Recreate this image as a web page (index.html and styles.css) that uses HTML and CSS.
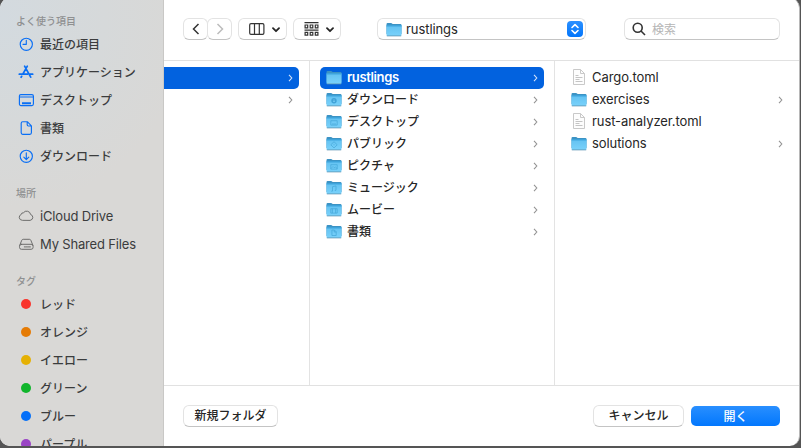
FILE: index.html
```html
<!DOCTYPE html>
<html lang="ja">
<head>
<meta charset="utf-8">
<title>開く</title>
<link rel="stylesheet" href="styles.css">
</head>
<body>
<svg class="defs" aria-hidden="true">
  <defs>
    <linearGradient id="face" x1="0" y1="0" x2="0" y2="1"><stop offset="0" stop-color="#62c1f1"/><stop offset="1" stop-color="#7ad2fb"/></linearGradient>
    <symbol id="folder" viewBox="0 0 16 15">
      <path d="M.5 2.2Q.5 1 1.6 1H5q.7 0 1.1.5l.5.5h7.8q1.1 0 1.1 1.1V12H.5z" fill="#3c93c4"/>
      <path d="M.5 3.4h15v9.5q0 1.1-1.1 1.1H1.6Q.5 14 .5 12.900z" fill="url(#face)"/>
      <path d="M.5 3.9h15" stroke="#339fd9"/>
      <path d="M.8 13.900h14.400" stroke="#5d95b2" stroke-width=".8"/>
    </symbol>
    <symbol id="doc" viewBox="0 0 14 16">
      <path d="M1.500.5h7l4 4v11h-11z" fill="#fdfdfd" stroke="#c9c9c9"/>
      <path d="M8.500.5v4h4" fill="none" stroke="#c9c9c9"/>
      <path d="M3.500 6.500h3M3.500 8.500h7M3.500 10.500h4M3.500 12.500h7" stroke="#bdbdbd" stroke-width=".9"/>
    </symbol>
    <symbol id="chev" viewBox="0 0 5 8"><path d="M1 .8 3.800 4 1 7.200" fill="none" stroke="currentColor" stroke-width="1.100"/></symbol>
    <symbol id="down" viewBox="0 0 8 6"><path d="M1 1.200 4 4.200 7 1.200" fill="none" stroke="currentColor" stroke-width="1.800" stroke-linecap="round" stroke-linejoin="round"/></symbol>
  </defs>
</svg>
<div class="window">
  <nav class="sidebar">
    <h2>よく使う項目</h2>
    <ul>
      <li><svg class="ic" viewBox="0 0 16 16"><circle cx="8.300" cy="8.300" r="6.100"/><path d="M8.300 4.300v4H5"/></svg>最近の項目</li>
      <li><svg class="ic" viewBox="0 0 16 16"><path class="bold" d="M6.600 2.200 12.700 13.200M9.300 2.200 4.900 10M1.300 10.200h8M12 10.200h2.700M3.700 12.300l-.6 1"/></svg>アプリケーション</li>
      <li><svg class="ic" viewBox="0 0 16 16"><rect x="1.400" y="2.600" width="14" height="11" rx="1.500"/><path d="M1.500 5h14"/><path class="dock" d="M4 11.200h9"/></svg>デスクトップ</li>
      <li><svg class="ic" viewBox="0 0 16 16"><path d="M4.700 1.700h4.600l4.100 4.200v6.900q0 1.500-1.500 1.500H4.700q-1.500 0-1.500-1.500V3.200q0-1.500 1.500-1.500zM9.200 1.900v2.900q0 1.200 1.200 1.200h2.900"/></svg>書類</li>
      <li><svg class="ic" viewBox="0 0 16 16"><circle cx="8.300" cy="8.300" r="6.100"/><path d="M8.300 4.900v6.600M5.800 9.200 8.300 11.600l2.500-2.400"/></svg>ダウンロード</li>
    </ul>
    <h2>場所</h2>
    <ul>
      <li class="latin"><svg class="ic gray" viewBox="0 0 16 16"><path d="M4 12.300a3 3 0 0 1-.8-5.800 2 2 0 0 1 2.200-1.700 4 4 0 0 1 7.200 1.700A3 3 0 0 1 12.500 12.300z"/></svg>iCloud Drive</li>
      <li class="latin"><svg class="ic gray" viewBox="0 0 16 16"><path d="M1.700 9.300 3.800 4.200q.4-.9 1.400-.9h6.200q1 0 1.400.9l2.100 5.100"/><rect x="1.500" y="8.300" width="13.600" height="5" rx="2"/><path d="M6.300 10.900h6.500" stroke-dasharray="1 .7"/></svg>My Shared Files</li>
    </ul>
    <h2>タグ</h2>
    <ul>
      <li><i class="tag red"></i>レッド</li>
      <li><i class="tag orange"></i>オレンジ</li>
      <li><i class="tag yellow"></i>イエロー</li>
      <li><i class="tag green"></i>グリーン</li>
      <li><i class="tag blue"></i>ブルー</li>
      <li><i class="tag purple"></i>パープル</li>
    </ul>
  </nav>
  <main>
    <header class="toolbar">
      <div class="nav">
        <span class="ctl"><svg width="8" height="12" viewBox="0 0 8 12"><path d="M6.500 1 1.500 6l5 5"/></svg></span>
        <span class="ctl off"><svg width="8" height="12" viewBox="0 0 8 12"><path d="M1.500 1l5 5-5 5"/></svg></span>
      </div>
      <span class="ctl view"><svg width="16" height="12" viewBox="0 0 16 12"><rect x=".7" y=".7" width="14.200" height="10.600" rx="1.300"/><path d="M5.500 1v10M10.300 1v10"/></svg><svg class="dn" width="8" height="6"><use href="#down"/></svg></span>
      <span class="ctl group"><svg width="15" height="14" viewBox="0 0 15 14"><path d="M.5.6h14M.5 8.100h14"/><path d="M1.100 3h2.600v2.900H1.100zM6.200 3h2.600v2.900H6.200zM11.300 3h2.600v2.900h-2.600zM1.100 10.300h2.600v2.900H1.100zM6.200 10.300h2.600v2.900H6.200zM11.300 10.300h2.600v2.900h-2.600z"/></svg><svg class="dn" width="8" height="6"><use href="#down"/></svg></span>
      <span class="ctl path"><svg class="folder" width="16" height="15"><use href="#folder"/></svg><span class="name">rustlings</span><span class="updown"><svg width="10" height="12" viewBox="0 0 10 12"><path d="M2 4.500 5 1.600l3 2.900M2 7.500l3 2.900 3-2.900"/></svg></span></span>
      <span class="ctl search"><svg width="14" height="14" viewBox="0 0 14 14"><circle cx="5.700" cy="5.700" r="4.500"/><path d="M9 9l4 4"/></svg><span>検索</span></span>
    </header>
    <section class="columns">
      <div class="col first">
        <div class="row sel"><svg class="chev"><use href="#chev"/></svg></div>
        <div class="row"><svg class="chev"><use href="#chev"/></svg></div>
      </div>
      <div class="col second">
        <div class="row sel latin"><svg class="folder"><use href="#folder"/></svg>rustlings<svg class="chev"><use href="#chev"/></svg></div>
        <div class="row"><svg class="folder" viewBox="0 0 16 15"><use href="#folder"/><circle class="fill" cx="8" cy="8.700" r="2.700"/><path class="light" d="M8 7.300v2.500M7 9l1 1 1-1"/></svg>ダウンロード<svg class="chev"><use href="#chev"/></svg></div>
        <div class="row"><svg class="folder" viewBox="0 0 16 15"><use href="#folder"/><path class="mark" d="M4.800 6.700h6.400v4.400H4.800zM6 10h4"/></svg>デスクトップ<svg class="chev"><use href="#chev"/></svg></div>
        <div class="row"><svg class="folder" viewBox="0 0 16 15"><use href="#folder"/><path class="mark" d="M8 5.700 11.200 8.800 8 11.900 4.800 8.800zM7.500 8.800h1"/></svg>パブリック<svg class="chev"><use href="#chev"/></svg></div>
        <div class="row"><svg class="folder" viewBox="0 0 16 15"><use href="#folder"/><path class="mark" d="M4.800 6.700h6.400v4.400H4.800zM5 10.500l2-2 1.200 1.200 1-.8 2 1.600"/></svg>ピクチャ<svg class="chev"><use href="#chev"/></svg></div>
        <div class="row"><svg class="folder" viewBox="0 0 16 15"><use href="#folder"/><path class="mark" d="M6.500 11V6.700l3.500-.8v4.300M5.300 11.200h1.200M8.800 10.400H10"/></svg>ミュージック<svg class="chev"><use href="#chev"/></svg></div>
        <div class="row"><svg class="folder" viewBox="0 0 16 15"><use href="#folder"/><path class="mark" d="M4.800 6.700h6.400v4.400H4.800zM6.400 6.700v4.400M9.600 6.700v4.400"/></svg>ムービー<svg class="chev"><use href="#chev"/></svg></div>
        <div class="row"><svg class="folder" viewBox="0 0 16 15"><use href="#folder"/><path class="mark" d="M5.900 6h2.500l1.800 1.800v3.700H5.900zM8.300 6v2h2"/></svg>書類<svg class="chev"><use href="#chev"/></svg></div>
      </div>
      <div class="col third">
        <div class="row latin"><svg class="doc"><use href="#doc"/></svg>Cargo.toml</div>
        <div class="row latin"><svg class="folder"><use href="#folder"/></svg>exercises<svg class="chev"><use href="#chev"/></svg></div>
        <div class="row latin"><svg class="doc"><use href="#doc"/></svg>rust-analyzer.toml</div>
        <div class="row latin"><svg class="folder"><use href="#folder"/></svg>solutions<svg class="chev"><use href="#chev"/></svg></div>
      </div>
    </section>
    <footer>
      <button class="ctl new">新規フォルダ</button>
      <button class="ctl cancel">キャンセル</button>
      <button class="open">開く</button>
    </footer>
  </main>
</div>
</body>
</html>
```
FILE: styles.css
```css
* { box-sizing: border-box; }
body {
  margin: 0;
  height: 448px;
  overflow: hidden;
  background: #555;
  font: 500 12px/22px "Noto Sans CJK JP", sans-serif;
  color: #262626;
}
.defs { position: absolute; width: 0; height: 0; }
.latin, .name { font-family: Inter, sans-serif; font-size: 13px; font-weight: 400; letter-spacing: -.08px; }
.window {
  width: 800px;
  height: 448px;
  margin-top: -2px;
  padding-top: 2px;
  display: flex;
  overflow: hidden;
  border-radius: 10px;
  background: #fff;
  border-right: 1px solid #b8b8b8;
}

/* Sidebar */
.sidebar {
  width: 164px;
  flex: none;
  margin-top: -2px;
  padding-top: 14px;
  background: radial-gradient(ellipse 190px 190px at 0 20px, #d3dadf, #d6d9da 55%, #d9d8d6);
  border-right: 1px solid #c9c8c6;
}
.sidebar h2 {
  margin: 14px 0 0;
  padding-left: 16px;
  font-size: 10px;
  line-height: 18px;
  font-weight: 500;
  color: #8f9091;
}
.sidebar h2:first-child { margin-top: 0; }
.sidebar ul { margin: 0; padding: 0; list-style: none; }
.sidebar li {
  display: flex;
  align-items: center;
  height: 28px;
  padding-left: 18px;
  white-space: nowrap;
  color: #3b3c3d;
}
.sidebar .latin { letter-spacing: -.17px; }
.ic {
  width: 16px;
  height: 16px;
  margin-right: 6px;
  fill: none;
  stroke: #0a6ff5;
  stroke-width: 1.15;
  stroke-linecap: round;
  stroke-linejoin: round;
}
.ic .bold { stroke-width: 1.7; }
.ic .dock { stroke-width: 2; stroke-linecap: butt; }
.ic.gray { stroke: #6d6d6c; stroke-width: 1; }
.tag { width: 10px; height: 10px; margin: 0 9px 0 3px; border-radius: 50%; }
.red { background: #f9342c; }
.orange { background: #e57b05; }
.yellow { background: #e5b104; }
.green { background: #11b52c; }
.blue { background: #046ff8; }
.purple { background: #9a45c5; }

/* Toolbar */
main { flex: 1; display: flex; flex-direction: column; min-width: 0; }
.toolbar { height: 61px; display: flex; align-items: flex-start; padding: 18px 0 0 19px; border-bottom: 1px solid #e1e1e1; }
.ctl {
  display: flex;
  align-items: center;
  height: 22px;
  border: 1px solid #e3e3e3;
  border-bottom-color: #c4c4c4;
  border-radius: 6px;
  background: #fff;
}
.ctl svg:not(.folder) { fill: none; stroke: #333; stroke-width: 1.2; }
.nav { display: flex; margin-right: 6px; }
.nav .ctl { width: 25px; justify-content: center; }
.nav .ctl + .ctl { margin-left: -1px; }
.nav .ctl svg { stroke-width: 1.5; }
.nav .off svg { stroke: #bcbcbc; }
.view { width: 49px; padding-left: 10px; margin-right: 6px; }
.view .dn { margin: 2px 0 0 7px; }
.group { width: 48px; padding-left: 10px; margin-right: 36px; }
.group .dn { margin: 2px 0 0 7px; }
.path { width: 209px; padding: 0 2px 0 8px; margin-right: 38px; }
.name { margin-left: 4px; }
.updown {
  width: 16px;
  height: 16px;
  margin-left: auto;
  display: flex;
  align-items: center;
  justify-content: center;
  border-radius: 4px;
  background: linear-gradient(#2b90ff, #0275fb);
}
.updown svg:not(.folder) { stroke: #fff; stroke-width: 1.6; stroke-linecap: round; stroke-linejoin: round; }
.search { width: 156px; padding-left: 7px; color: #b5b5b5; font-weight: 400; }
.search svg:not(.folder) { stroke-width: 1.6; margin-right: 6px; }

/* Column browser */
.columns { height: 324px; display: flex; }
.col { padding-top: 6px; border-right: 1px solid #e3e3e3; }
.first { width: 146px; }
.second { width: 245px; padding-left: 10px; }
.third { flex: 1; padding-left: 10px; border: 0; }
.row { display: flex; align-items: center; height: 22px; margin-right: 10px; padding: 0 6px 2px; white-space: nowrap; }
.sel { background: #0262df; color: #fff; border-radius: 0 5px 5px 0; font-weight: 600; }
.second .sel { border-radius: 5px; letter-spacing: -.35px; }
.folder { width: 16px; height: 15px; flex: none; }
.row .folder, .row .doc { margin-right: 5px; }
.row .folder { position: relative; top: .5px; }
.doc { width: 16px; height: 16px; flex: none; }
.chev { width: 5px; height: 8px; margin: 1px 0 0 auto; color: #939393; }
.sel .chev { color: #d2e2fa; }
.mark { fill: none; stroke: #48a9db; stroke-width: .8; }
.fill { fill: #41a3d8; }
.light { fill: none; stroke: #78cdf6; stroke-width: .7; }

/* Footer */
footer { flex: 1; display: flex; padding: 19px 19px 0; border-top: 1px solid #e1e1e1; }
button { font: inherit; line-height: 20px; color: inherit; padding: 0 0 2px; justify-content: center; }
.new { width: 95px; }
.cancel { width: 91px; margin-left: auto; margin-right: 7px; }
.open { width: 89px; height: 20px; margin-top: 1px; border: 0; border-radius: 5px; background: linear-gradient(#298fff, #0277fd); color: #fff; }
```
